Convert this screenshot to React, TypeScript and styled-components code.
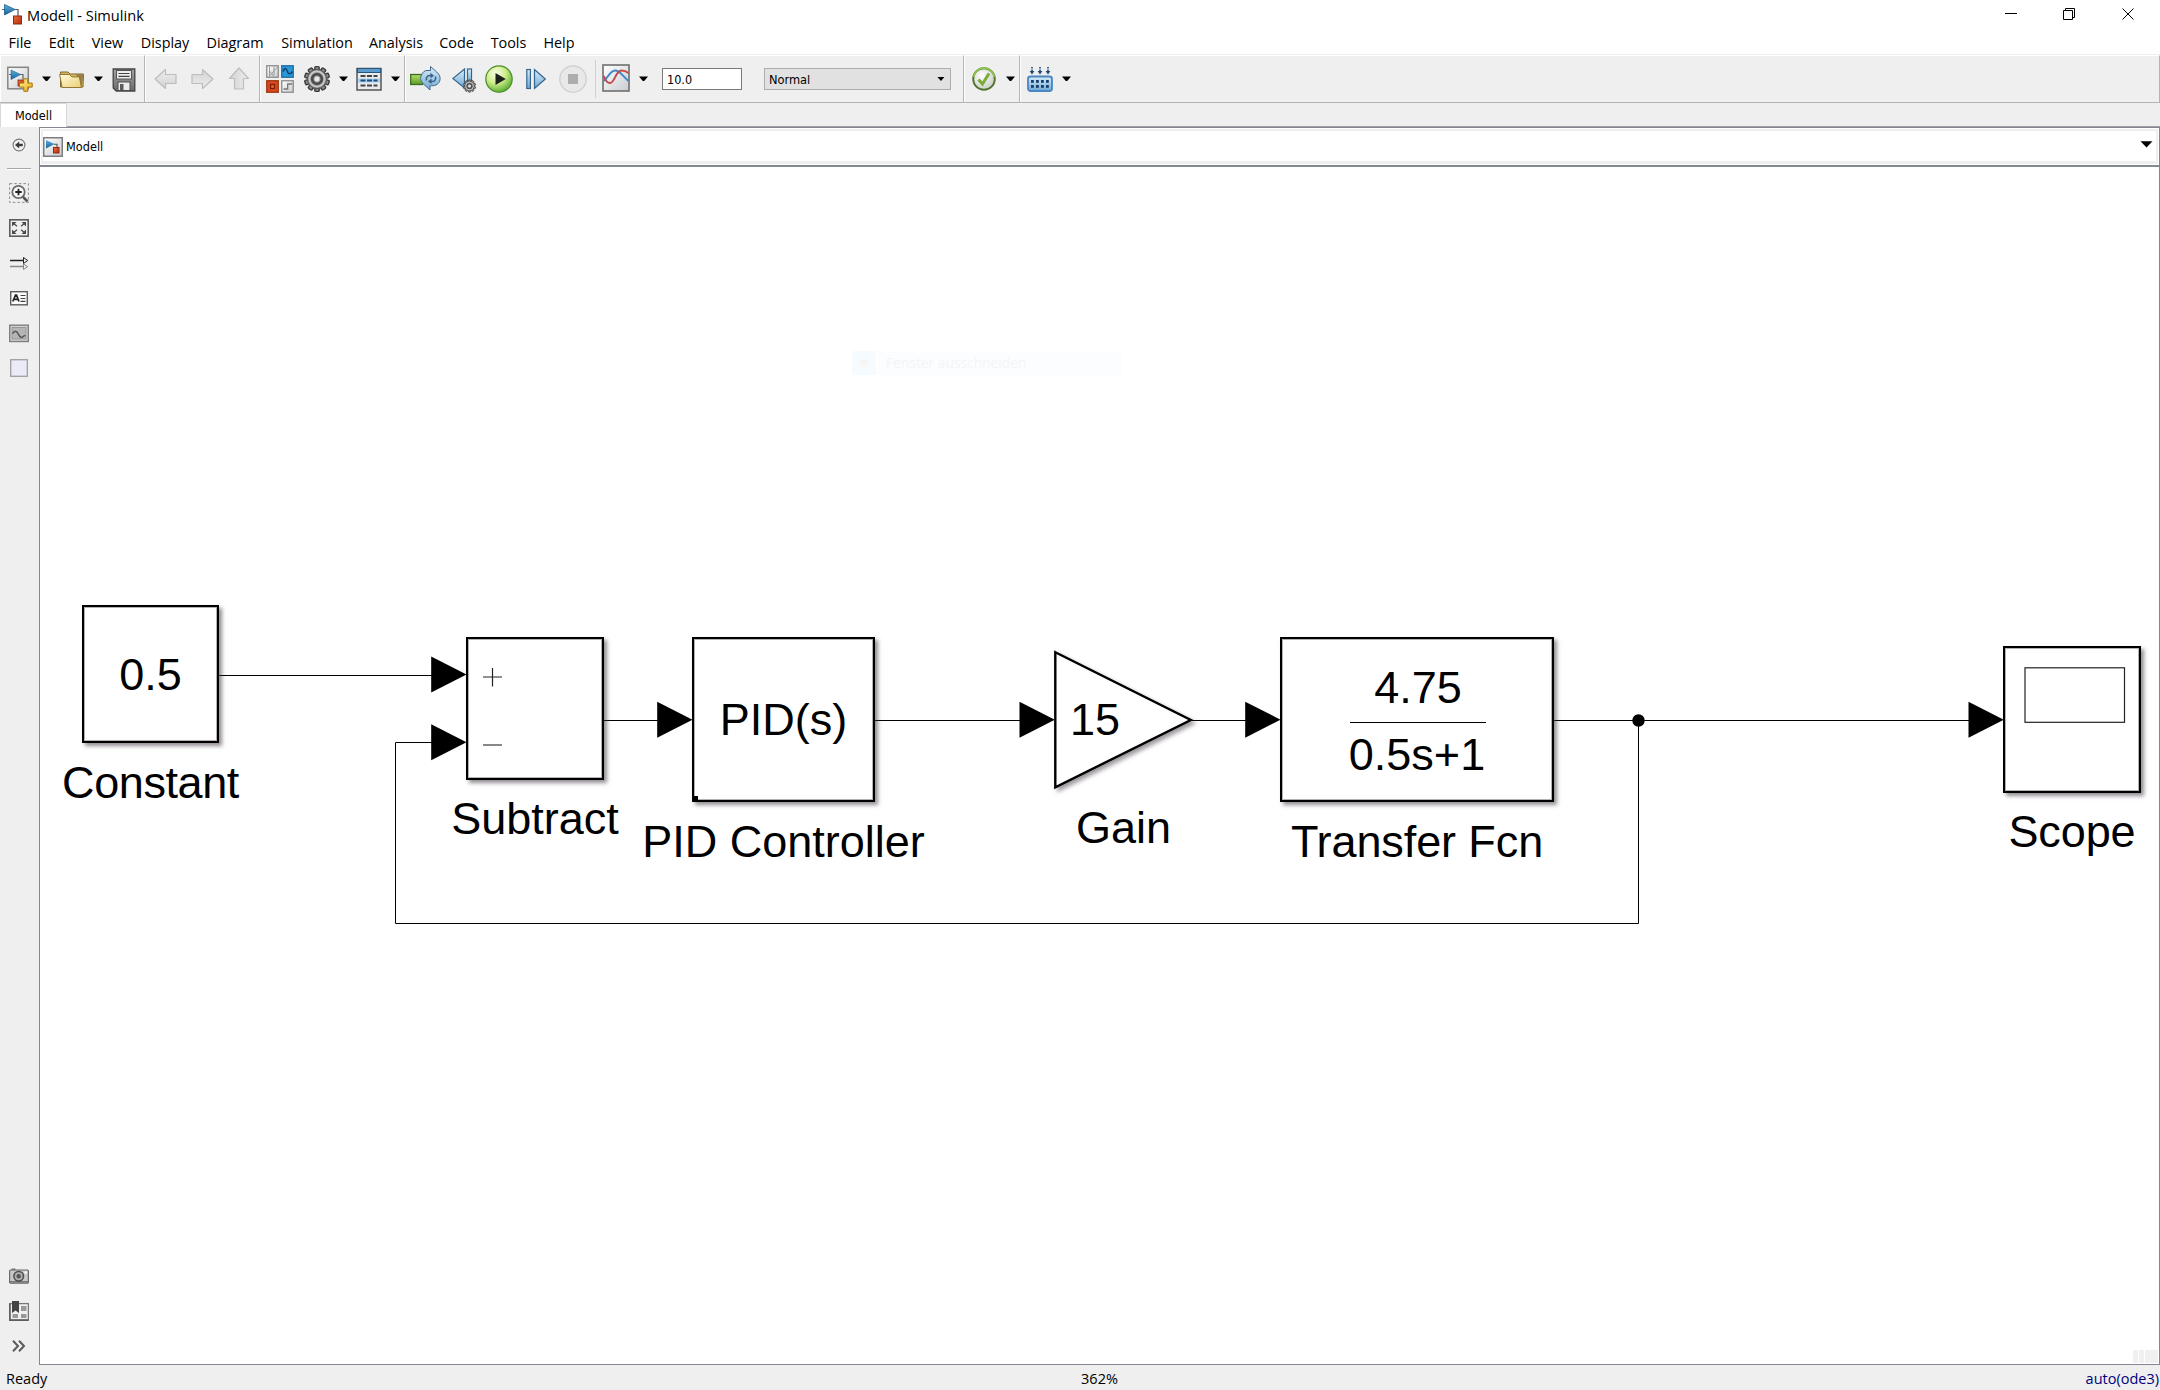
import React from 'react';
import styled, { createGlobalStyle } from 'styled-components';

const UI_FONT = '"Open Sans", "Noto Sans", sans-serif';
const SMALL_FONT = '"DejaVu Sans Condensed", "DejaVu Sans", sans-serif';
const BLOCK_FONT = '"Liberation Sans", Arial, sans-serif';
const EDGE = '#828790';

const GlobalStyle = createGlobalStyle`
  html, body { margin: 0; padding: 0; background: #fff; }
  body { overflow: hidden; }
  *, *::before, *::after { box-sizing: border-box; }
  svg { display: block; flex: none; }
`;

/* ---------- window frame ---------- */

const Window = styled.div`
  display: flex;
  flex-direction: column;
  width: 2160px;
  height: 1390px;
  background: #fff;
  color: #000;
  font: 14.5px/20px ${UI_FONT};
`;

const TitleBar = styled.header`
  display: flex;
  align-items: center;
  height: 30px;
  padding-left: 2px;
`;

const Title = styled.span`
  flex: 1;
  padding-left: 5px;
  font-size: 14.6px;
`;

const WindowControls = styled.div`
  display: flex;
  margin-right: -1px;
`;

const MenuBar = styled.nav`
  display: flex;
  height: 24px;
`;

const MenuItem = styled.span<{ $w: number }>`
  width: ${p => p.$w}px;
  padding-top: 3px;
  text-align: center;
  white-space: nowrap;
  font-size: 14.4px;
`;

/* ---------- toolbar ---------- */

const ToolBar = styled.div`
  display: flex;
  height: 49px;
  border-top: 1px solid #efefef;
  border-bottom: 1px solid #b4b4b4;
  background: #efefef;
`;

const ToolGroup = styled.div<{ $w?: number }>`
  display: flex;
  align-items: center;
  ${p => (p.$w ? `width: ${p.$w}px;` : 'flex: 1;')}
  border-top: 1px solid #fff;
  border-left: 1px solid #fff;
  border-right: 1px solid #b4b4b4;
`;

const ToolButton = styled.span<{ $gap?: number }>`
  margin-left: ${p => p.$gap ?? 0}px;
`;

const ToolDivider = styled.i<{ $gap: number }>`
  width: 1px;
  height: 38px;
  margin-left: ${p => p.$gap}px;
  background: #cfcfcf;
`;

const TimeField = styled.div`
  width: 80px;
  height: 22px;
  margin-left: 14px;
  padding-left: 4px;
  border: 1px solid #7a7a7a;
  background: #fff;
  font: 12.5px/21px ${SMALL_FONT};
`;

const ModeSelect = styled.div`
  display: flex;
  align-items: center;
  justify-content: space-between;
  width: 187px;
  height: 22px;
  margin-left: 22px;
  padding: 0 5px 0 4px;
  border: 1px solid #adadad;
  background: #e1e1e1;
  font: 12.7px/21px ${SMALL_FONT};
`;

/* ---------- tabs ---------- */

const TabStrip = styled.div`
  display: flex;
  height: 24px;
  background: #efefef;
`;

const Tab = styled.div`
  width: 67px;
  border: 1px solid #d9d9d9;
  border-bottom: 0;
  background: #fff;
  text-align: center;
  font: 12.6px/24px ${SMALL_FONT};
`;

const TabFill = styled.div`
  flex: 1;
  border-bottom: 1px solid #a0a0a0;
`;

/* ---------- work area ---------- */

const WorkArea = styled.div`
  display: flex;
  height: 1238px;
`;

const SideBar = styled.aside`
  display: flex;
  flex-direction: column;
  width: 39px;
  padding-bottom: 2px;
  background: #efefef;
`;

const SideButton = styled.span<{ $h?: number }>`
  display: flex;
  align-items: center;
  height: ${p => p.$h ?? 35}px;
  padding-left: 9px;
`;

const SideRule = styled.i`
  width: 24px;
  height: 2px;
  margin: 5px 0 5px 7px;
  border-top: 1px solid #a8a8a8;
  border-bottom: 1px solid #fff;
`;

const SideSpacer = styled.div`
  flex: 1;
`;

const EditorPane = styled.main`
  display: flex;
  flex: 1;
  flex-direction: column;
  border: 1px solid ${EDGE};
`;

const PathBar = styled.div`
  padding: 1px 1px 1px 1px;
  border-bottom: 2px solid ${EDGE};
`;

const PathInner = styled.div`
  display: flex;
  align-items: center;
  height: 35px;
  padding-top: 1px;
  padding-right: 3px;
  border: 2px solid #efefef;
  border-bottom-width: 3px;
`;

const PathName = styled.span`
  flex: 1;
  padding-left: 3px;
  font: 12.6px/20px ${SMALL_FONT};
`;

const StatusBar = styled.footer`
  display: grid;
  grid-template-columns: 1fr auto 1fr;
  height: 25px;
  padding: 4px 1px 0 6px;
  background: #efefef;
  font-size: 14.5px;
`;

const Zoom = styled.span`
  padding-left: 34px;
`;

const Solver = styled.span`
  text-align: right;
  color: #000080;
`;

/* ---------- diagram canvas ---------- */

const Canvas = styled.div`
  position: relative;
  flex: 1;
  overflow: hidden;
  background: #fff;
  font: 45px/52px ${BLOCK_FONT};
`;

const Wires = styled.svg`
  position: absolute;
  inset: 0;
`;

const Block = styled.div<{ $x: number; $y: number; $w: number }>`
  position: absolute;
  left: ${p => p.$x}px;
  top: ${p => p.$y}px;
  display: flex;
  flex-direction: column;
  align-items: center;
  width: ${p => p.$w}px;
`;

const Frame = styled.div<{ $h: number }>`
  display: flex;
  flex-direction: column;
  align-items: center;
  justify-content: center;
  width: 100%;
  height: ${p => p.$h}px;
  padding-top: 1px;
  border: 2px solid #000;
  background: #fff;
  box-shadow: inset 0 0 0 1px rgba(0, 0, 0, 0.3), 3px 3px 4px rgba(60, 50, 60, 0.55);
`;

const PlainFrame = styled.div`
  position: relative;
  width: 100%;
`;

const GainValue = styled.span`
  position: absolute;
  left: 16px;
  top: 44px;
`;

const BlockName = styled.div<{ $gap: number; $track?: number }>`
  margin-top: ${p => p.$gap}px;
  letter-spacing: ${p => p.$track ?? 0}px;
  white-space: nowrap;
`;

const Fraction = styled.div`
  display: flex;
  flex-direction: column;
  align-items: center;
  width: 136px;
  padding-top: 3px;
  margin-left: 2px;
`;

const Numerator = styled.div`
  padding-bottom: 8px;
`;

const Denominator = styled.div`
  width: 100%;
  padding-top: 6px;
  border-top: 1px solid #000;
  text-indent: -2px;
  text-align: center;
  white-space: nowrap;
`;

const MenuGhost = styled.div`
  position: absolute;
  left: 812px;
  top: 184px;
  display: flex;
  gap: 1px;
  width: 270px;
  height: 24px;
  font: 13.8px/24px ${UI_FONT};
  color: #f5f5f6;
`;

const GhostIcon = styled.div`
  width: 24px;
  padding: 8px;
  background: #f6fbff;
`;

const GhostText = styled.div`
  flex: 1;
  padding-left: 9px;
  background: #fbfdff;
`;

const CornerGrip = styled.div`
  position: absolute;
  right: 1px;
  bottom: 1px;
  display: grid;
  grid-template-columns: 5px 5px 13px;
  gap: 1px;
  height: 13px;
`;

const GripCell = styled.i`
  background: #f0f0f0;
`;

/* ---------- icons ---------- */

const DefsSvg = styled.svg`
  position: absolute;
`;

const Defs = () => (
  <DefsSvg width="0" height="0">
    <defs>
      <linearGradient id="paper" x1="0" y1="0" x2="1" y2="1">
        <stop offset="0" stopColor="#fff" /><stop offset="1" stopColor="#c9cdd1" />
      </linearGradient>
      <linearGradient id="blue" x1="0" y1="0" x2="0" y2="1">
        <stop offset="0" stopColor="#5cb4e0" /><stop offset="1" stopColor="#145f9c" />
      </linearGradient>
      <linearGradient id="sky" x1="0" y1="0" x2="0" y2="1">
        <stop offset="0" stopColor="#d9edf9" /><stop offset="1" stopColor="#6fa9d3" />
      </linearGradient>
      <linearGradient id="red" x1="0" y1="0" x2="1" y2="1">
        <stop offset="0" stopColor="#ee6b3c" /><stop offset="1" stopColor="#b32c0c" />
      </linearGradient>
      <linearGradient id="gold" x1="0" y1="0" x2="1" y2="1">
        <stop offset="0" stopColor="#fff7a0" /><stop offset="1" stopColor="#e5a80e" />
      </linearGradient>
      <linearGradient id="folder" x1="0" y1="0" x2="1" y2="1">
        <stop offset="0" stopColor="#fffbe0" /><stop offset="1" stopColor="#edcf72" />
      </linearGradient>
      <linearGradient id="steel" x1="0" y1="0" x2="0" y2="1">
        <stop offset="0" stopColor="#a6a6a6" /><stop offset="1" stopColor="#6a6a6a" />
      </linearGradient>
      <linearGradient id="fade" x1="0" y1="0" x2="0" y2="1">
        <stop offset="0" stopColor="#eeeeee" /><stop offset="1" stopColor="#d2d2d2" />
      </linearGradient>
      <linearGradient id="green" x1="0" y1="0" x2="0" y2="1">
        <stop offset="0" stopColor="#b4dc6c" /><stop offset="1" stopColor="#5c9c26" />
      </linearGradient>
      <radialGradient id="play" cx="0.38" cy="0.3" r="0.75">
        <stop offset="0" stopColor="#fbffe6" /><stop offset="0.5" stopColor="#cdeb8a" /><stop offset="1" stopColor="#4fa82a" />
      </radialGradient>
      <radialGradient id="disc" cx="0.4" cy="0.35" r="0.75">
        <stop offset="0" stopColor="#fff" /><stop offset="1" stopColor="#c4cac0" />
      </radialGradient>
    </defs>
  </DefsSvg>
);

const Caret = () => (
  <svg width="9" height="6" viewBox="0 0 9 6"><path d="M0 .4h9L5.2 5h-1.4z" fill="#000" /></svg>
);

const SmallCaret = () => (
  <svg width="8" height="5" viewBox="0 0 8 5"><path d="M.4 0h7L4 4z" fill="#000" /></svg>
);

const PathCaret = () => (
  <svg width="13" height="11" viewBox="0 0 13 11"><path d="M.5.3h12L6.500 6.600z" fill="#000" /></svg>
);

const AppIcon = () => (
  <svg width="20" height="22" viewBox="0 0 20 22">
    <path d="M0 5.500h3M13 5.500h3v7" fill="none" stroke="#555c63" strokeWidth="1.2" />
    <path d="M2.500.5 13 5.500 2.500 11z" fill="url(#blue)" stroke="#1c5d8c" strokeWidth=".8" />
    <rect x="11.500" y="12" width="8" height="8" fill="url(#red)" stroke="#8d2a10" />
  </svg>
);

const ModelIcon = () => (
  <svg width="20" height="20" viewBox="0 0 20 20">
    <rect x=".75" y=".75" width="18.500" height="18.500" fill="url(#paper)" stroke="#7d7d7d" strokeWidth="1.5" />
    <path d="M11 7.200h3v3.500" fill="none" stroke="#555" strokeWidth="1.1" />
    <path d="M3 3l8.500 4L3 11.400z" fill="url(#blue)" />
    <rect x="10.500" y="10.500" width="5.500" height="5.500" fill="url(#red)" stroke="#8d2a10" />
  </svg>
);

const NewModelIcon = () => (
  <svg width="26" height="30" viewBox="0 0 26 30">
    <rect x=".8" y="3.300" width="20.500" height="21.500" fill="url(#paper)" stroke="#858585" strokeWidth="1.5" />
    <path d="M2 10.500h3M13 10.500h3v5" fill="none" stroke="#666" strokeWidth="1.2" />
    <path d="M4 6l9.500 4.500L4 15.500z" fill="url(#blue)" stroke="#1c5d8c" strokeWidth=".6" />
    <rect x="11" y="16" width="6" height="6" fill="url(#red)" stroke="#8d2a10" strokeWidth=".8" />
    <path d="M16.800 14.800h4v4.300h4.400v4h-4.400V27.300h-4v-4.200h-4.300v-4h4.300z" fill="url(#gold)" stroke="#a87407" />
  </svg>
);

const OpenIcon = () => (
  <svg width="26" height="30" viewBox="0 0 26 30">
    <path d="M1.500 23V8h7.500l2 2h13.500l-.5 13z" fill="#d9b85b" stroke="#80662c" />
    <path d="M17 10h7.500l-2 13z" fill="#9b7f45" />
    <path d="M.6 10.500h9.800l2.500 2.400h7.500L22.400 23.500H3.200z" fill="url(#folder)" stroke="#927638" />
  </svg>
);

const SaveIcon = () => (
  <svg width="24" height="30" viewBox="0 0 24 30">
    <path d="M1.200 5h21.600v22H4.200l-3-3z" fill="url(#steel)" stroke="#444" strokeWidth="1.3" />
    <rect x="4.500" y="6.500" width="15" height="8.500" fill="#ececec" stroke="#555" />
    <path d="M6.500 9.500h11M6.500 12.300h11" stroke="#444" strokeWidth="1.2" />
    <rect x="6" y="18" width="12" height="8.500" fill="#ececec" stroke="#4c4c4c" />
    <rect x="8" y="20" width="3.500" height="6" fill="#5a5a5a" />
  </svg>
);

const ArrowIcon = ({ turn }: { turn: number }) => (
  <svg width="24" height="30" viewBox="0 0 24 30">
    <g transform={`rotate(${turn} 12 15)`}>
      <path d="M1 15 11.500 5.500v5h10.500v9H11.500v5z" fill="url(#fade)" stroke="#bdbdbd" strokeWidth="1.2" strokeLinejoin="round" />
    </g>
  </svg>
);

const LibraryIcon = () => (
  <svg width="28" height="30" viewBox="0 0 28 30">
    <rect x=".75" y="1.750" width="11.500" height="11.500" fill="url(#paper)" stroke="#8b8b8b" strokeWidth="1.300" />
    <path d="M3.500 2.500v10M8 2.500v9M3.500 12l8-9M3.500 7l4 5" fill="none" stroke="#9a9a9a" />
    <rect x="15.750" y="1.750" width="11.500" height="11.500" fill="#2b97d6" stroke="#1b6ea6" strokeWidth="1.300" />
    <path d="M17 7.500c1.500-4 3-4 4.200-.5s2.800 4 5.300.5" fill="none" stroke="#0b3f6b" strokeWidth="1.400" />
    <rect x=".75" y="16.750" width="11.500" height="11.500" fill="#d9481f" stroke="#a2330f" strokeWidth="1.300" />
    <rect x="4.500" y="20.500" width="4" height="4" fill="#e8663c" stroke="#7d1f08" strokeWidth="1.300" />
    <rect x="15.750" y="16.750" width="11.500" height="11.500" fill="url(#paper)" stroke="#8b8b8b" strokeWidth="1.300" />
    <path d="M17.500 25h4.200v-5h4.500" fill="none" stroke="#777" strokeWidth="1.300" />
  </svg>
);

const GearShape = ({ cx, cy, r }: { cx: number; cy: number; r: number }) => (
  <g transform={`translate(${cx} ${cy}) scale(${r / 13})`}>
    {[0, 36, 72, 108, 144].map(a => (
      <rect key={a} x="-2.200" y="-12.400" width="4.400" height="24.800" rx="1" transform={`rotate(${a})`} fill="#8a8a8a" stroke="#3c3c3c" strokeWidth="1.400" />
    ))}
    <circle r="9.600" fill="#8c8c8c" stroke="#555" />
    <circle r="7.600" fill="none" stroke="#c9c9c9" strokeWidth="1.800" />
    <circle r="4.800" fill="#b4b4b4" stroke="#4a4a4a" strokeWidth="2.600" />
    <circle r="2.200" fill="#ececec" />
  </g>
);

const GearIcon = () => (
  <svg width="26" height="30" viewBox="0 0 26 30"><GearShape cx={13} cy={15} r={13} /></svg>
);

const ExplorerIcon = () => (
  <svg width="26" height="30" viewBox="0 0 26 30">
    <rect x="1" y="4.500" width="24" height="21.500" fill="#e9ebee" stroke="#555" strokeWidth="1.500" />
    <rect x="1.500" y="4.500" width="23" height="4" fill="#5c9bce" stroke="#27567e" />
    <rect x="2" y="14.500" width="22" height="4" fill="#a9d0ee" />
    <path d="M4.500 12h5m1.500 0h5m1.500 0h4M4.500 21.500h5m1.500 0h5m1.500 0h4" stroke="#444" strokeWidth="1.800" />
    <path d="M4.500 16.500h5m1.500 0h5m1.500 0h4" stroke="#1d4a75" strokeWidth="1.800" />
  </svg>
);

const FastRestartIcon = () => (
  <svg width="31" height="30" viewBox="0 0 31 30">
    <rect x=".7" y="10.500" width="12" height="10" fill="url(#green)" stroke="#3c6f1c" strokeWidth="1.300" />
    <path d="M17 6.500h3.500V2.500l6 5.300c3 2.500 4 5 3.500 8-.6 4-4 6-8.500 6h-1.500v4.200l-6.500-6c-3-3-3.600-6-2-9 1.200-2.800 3-4.500 5.500-4.500z" fill="url(#sky)" stroke="#44698c" />
    <path d="M16.500 16.500c-.8-4 1.500-5.500 5-5M25.500 12.500c.8 4-1.500 5.500-5 5" fill="none" stroke="#3c5f86" strokeWidth="1.500" />
    <path d="M20.500 8.700l3.500 3-3.500 2.600zM21.500 14.500l-3.500 3 3.500 2.600z" fill="#3c5f86" />
  </svg>
);

const StepBackIcon = () => (
  <svg width="25" height="30" viewBox="0 0 25 30">
    <path d="M12.500 5v19L.8 14.500z" fill="url(#sky)" stroke="#33658f" strokeWidth="1.200" />
    <rect x="15.500" y="5" width="4" height="14" fill="url(#sky)" stroke="#33658f" strokeWidth="1.200" />
    <GearShape cx={17.500} cy={22} r={6.500} />
  </svg>
);

const RunIcon = () => (
  <svg width="28" height="30" viewBox="0 0 28 30">
    <circle cx="14" cy="15" r="13.200" fill="url(#play)" stroke="#4b8f28" strokeWidth="1.200" />
    <path d="M10.500 9 20.800 15l-10.300 6z" fill="#1c211a" />
  </svg>
);

const StepForwardIcon = () => (
  <svg width="20" height="30" viewBox="0 0 20 30">
    <rect x=".8" y="5.500" width="3.600" height="19" fill="url(#sky)" stroke="#33658f" strokeWidth="1.200" />
    <path d="M8.500 5.500v19l10.800-9.500z" fill="url(#sky)" stroke="#33658f" strokeWidth="1.200" />
  </svg>
);

const StopIcon = () => (
  <svg width="28" height="30" viewBox="0 0 28 30">
    <circle cx="14" cy="15" r="13.200" fill="#e8e8e8" stroke="#cdcdcd" strokeWidth="1.200" />
    <rect x="9" y="10" width="10" height="10" fill="#adadad" />
  </svg>
);

const ScopeIcon = () => (
  <svg width="28" height="30" viewBox="0 0 28 30">
    <rect x="1" y="1" width="26" height="26" fill="url(#paper)" stroke="#6f6f6f" strokeWidth="1.600" />
    <path d="M2 17C5 15 8 6.500 13 6.500s7 5 13.500 10.500" fill="none" stroke="#3d88cc" strokeWidth="1.900" />
    <path d="M2 12c1.500 5 3.500 7 6 7 5 0 5.500-12.500 11.500-12.500 3 0 5 1 7 2.500" fill="none" stroke="#c74848" strokeWidth="1.900" />
  </svg>
);

const CheckIcon = () => (
  <svg width="24" height="30" viewBox="0 0 24 30">
    <circle cx="12" cy="15" r="10.800" fill="url(#disc)" stroke="#55752f" strokeWidth="1.900" />
    <path d="M1.700 13a10.400 10.400 0 0 1 20.600 0" fill="none" stroke="#8fc94a" strokeWidth="1.700" />
    <path d="M6.500 15.500l4 4.500 6.500-10.500" fill="none" stroke="#79ad35" strokeWidth="3" />
  </svg>
);

const BuildIcon = () => (
  <svg width="26" height="30" viewBox="0 0 26 30">
    <g fill="#1f4a78">
      {[5, 13, 21].map(x => (
        <path key={x} d={`M${x - 0.8} 3h1.600v1.500h-1.600zM${x - 0.8} 5.500h1.600V7h1.600L${x} 10.600 ${x - 2.4} 7h1.600z`} />
      ))}
    </g>
    <rect x="1" y="12.500" width="24" height="14.500" rx="2.500" fill="url(#sky)" stroke="#4a86bf" strokeWidth="1.800" />
    <g fill="#153e6c">
      {[5, 10, 15, 20].map(x => <rect key={x} x={x - 1} y="16" width="2.800" height="2.800" />)}
      {[5, 10, 15, 20].map(x => <rect key={x} x={x - 1} y="21" width="2.800" height="2.800" />)}
    </g>
  </svg>
);

const HideIcon = () => (
  <svg width="20" height="20" viewBox="0 0 20 20">
    <circle cx="10" cy="10" r="5.900" fill="#f4f4f4" stroke="#7b7b7b" strokeWidth="1.200" />
    <path d="M6 10l4.200-3.600v2.400h3.600v2.400h-3.600v2.400z" fill="#3c3c3c" />
  </svg>
);

const ZoomIcon = () => (
  <svg width="20" height="20" viewBox="0 0 20 20">
    <rect x=".6" y=".6" width="18.800" height="18.800" fill="none" stroke="#8f8f8f" strokeDasharray="2.600 2" />
    <circle cx="9.500" cy="9" r="6.200" fill="#fafafa" stroke="#6c6c6c" strokeWidth="1.800" />
    <path d="M9.500 5.800v6.400M6.300 9h6.400" stroke="#222" strokeWidth="1.800" />
    <path d="M14 13.800l4.500 4.700" stroke="#555" strokeWidth="2.600" />
  </svg>
);

const FitIcon = () => (
  <svg width="20" height="20" viewBox="0 0 20 20">
    <rect x=".8" y="1.800" width="18.400" height="16.400" fill="#f0f0f0" stroke="#5d5d5d" strokeWidth="1.600" />
    <path d="M3 4h4.500L3 8.500zM17 4h-4.500L17 8.500zM3 16h4.500L3 11.500zM17 16h-4.500l4.500-4.500z" fill="#4a4a4a" />
    <path d="M4 5l4 3.300M16 5l-4 3.300M4 15l4-3.300M16 15l-4-3.300" stroke="#4a4a4a" strokeWidth="1.300" />
  </svg>
);

const SampleTimeIcon = () => (
  <svg width="20" height="20" viewBox="0 0 20 20">
    <path d="M1 7.500h14" stroke="#222" strokeWidth="1.500" />
    <path d="M1 13.500h14" stroke="#888" strokeWidth="1.500" />
    <path d="M14.500 4.500l4.200 3-4.200 3z" fill="#eee" stroke="#222" />
    <path d="M14.500 11l4.200 2.700-4.200 2.800z" fill="#eee" stroke="#888" />
  </svg>
);

const AnnotationIcon = () => (
  <svg width="20" height="20" viewBox="0 0 20 20">
    <rect x="1.700" y="3.700" width="16.600" height="13.100" fill="#fbfbfb" stroke="#5d5d5d" strokeWidth="1.400" />
    <path d="M3.800 13.500 6.500 7.200h1L10 13.500M5 11.300h4" fill="none" stroke="#222" strokeWidth="1.700" />
    <path d="M11.500 7.500h5M11.500 10.500h5M11.500 13.300h5" stroke="#444" strokeWidth="1.200" />
  </svg>
);

const ImageIcon = () => (
  <svg width="20" height="20" viewBox="0 0 20 20">
    <rect x=".7" y="2.200" width="18.600" height="16.300" fill="#d4d4d4" stroke="#7f7f7f" strokeWidth="1.400" />
    <rect x="3" y="4.500" width="14" height="11.500" fill="#b5b5b5" stroke="#979797" />
    <path d="M3.500 10.500c2-3 4-3 5.500 0s3 5 4.500 3.500 1.500-1.500 3-1.500" fill="none" stroke="#555" strokeWidth="1.600" />
  </svg>
);

const AreaIcon = () => (
  <svg width="20" height="20" viewBox="0 0 20 20">
    <rect x="1.700" y="1.700" width="16.600" height="16.600" fill="#eaeaf8" stroke="#9f9f9f" strokeWidth="1.300" />
  </svg>
);

const CameraIcon = () => (
  <svg width="20" height="20" viewBox="0 0 20 20">
    <path d="M2.500 2.500h4V5h-4z" fill="#777" />
    <rect x=".6" y="4" width="18.800" height="13.200" rx="1" fill="#c8c8c8" stroke="#6a6a6a" strokeWidth="1.200" />
    <path d="M1 15.800h18" stroke="#777" strokeWidth="1.500" />
    <circle cx="9.700" cy="10.300" r="4.800" fill="#b0b0b0" stroke="#4f4f4f" strokeWidth="1.600" />
    <circle cx="9.700" cy="10.300" r="2.200" fill="#555" />
    <rect x="15.500" y="5.500" width="2.500" height="2" fill="#fff" />
  </svg>
);

const BrowserIcon = () => (
  <svg width="20" height="20" viewBox="0 0 20 20">
    <rect x=".6" y="2.600" width="18.800" height="16.800" fill="#f0f0f0" stroke="#777" strokeWidth="1.300" />
    <path d="M1 3v16h18" fill="none" stroke="#555" strokeWidth="1.300" />
    <rect x="12" y="5" width="5.500" height="5" fill="#999" />
    <rect x="3.500" y="13" width="5.500" height="4" fill="#999" />
    <rect x="12" y="13" width="5.500" height="4" fill="#999" />
    <path d="M3 0h7v12L6.500 9.500 3 12z" fill="#444" />
  </svg>
);

const ExpandIcon = () => (
  <svg width="20" height="20" viewBox="0 0 20 20">
    <path d="M4 4.800l5 5.200-5 5.200M10 4.800l5 5.200-5 5.200" fill="none" stroke="#5a5a5a" strokeWidth="2" />
  </svg>
);

/* ---------- content ---------- */

const menus: [string, number][] = [
  ['File', 40], ['Edit', 43], ['View', 49], ['Display', 66], ['Diagram', 74],
  ['Simulation', 90], ['Analysis', 68], ['Code', 53], ['Tools', 51], ['Help', 50],
];

const Arrowhead = ({ x, y }: { x: number; y: number }) => (
  <path d={`M${x - 35.3} ${y - 18}L${x} ${y}L${x - 35.3} ${y + 18}z`} fill="#000" />
);

const GainOutline = styled.path`
  fill: #fff;
  stroke: #000;
  stroke-width: 2.4px;
  filter: drop-shadow(3px 3px 2px rgba(60, 50, 60, 0.5));
`;

export default function App() {
  return (
    <Window>
      <GlobalStyle />
      <Defs />
      <TitleBar>
        <AppIcon />
        <Title>Modell - Simulink</Title>
        <WindowControls>
          <svg width="156" height="30" viewBox="0 0 156 30" fill="none" stroke="#000">
            <path d="M0 13.500h12M58.500 10.500h9v9h-9zM60.500 10.500v-2h9v9h-2" />
            <path d="M117.500 8.500l11 11M128.500 8.500l-11 11" />
          </svg>
        </WindowControls>
      </TitleBar>
      <MenuBar>
        {menus.map(([name, w]) => <MenuItem key={name} $w={w}>{name}</MenuItem>)}
      </MenuBar>

      <ToolBar>
        <ToolGroup $w={145}>
          <ToolButton $gap={6}><NewModelIcon /></ToolButton>
          <ToolButton $gap={9}><Caret /></ToolButton>
          <ToolButton $gap={8}><OpenIcon /></ToolButton>
          <ToolButton $gap={9}><Caret /></ToolButton>
          <ToolButton $gap={9}><SaveIcon /></ToolButton>
        </ToolGroup>
        <ToolGroup $w={115}>
          <ToolButton $gap={8}><ArrowIcon turn={0} /></ToolButton>
          <ToolButton $gap={12}><ArrowIcon turn={180} /></ToolButton>
          <ToolButton $gap={13}><ArrowIcon turn={90} /></ToolButton>
        </ToolGroup>
        <ToolGroup $w={145}>
          <ToolButton $gap={5}><LibraryIcon /></ToolButton>
          <ToolButton $gap={10}><GearIcon /></ToolButton>
          <ToolButton $gap={9}><Caret /></ToolButton>
          <ToolButton $gap={8}><ExplorerIcon /></ToolButton>
          <ToolButton $gap={9}><Caret /></ToolButton>
        </ToolGroup>
        <ToolGroup $w={559}>
          <ToolButton $gap={4}><FastRestartIcon /></ToolButton>
          <ToolButton $gap={11}><StepBackIcon /></ToolButton>
          <ToolButton $gap={8}><RunIcon /></ToolButton>
          <ToolButton $gap={13}><StepForwardIcon /></ToolButton>
          <ToolButton $gap={13}><StopIcon /></ToolButton>
          <ToolDivider $gap={8} />
          <ToolButton $gap={6}><ScopeIcon /></ToolButton>
          <ToolButton $gap={9}><Caret /></ToolButton>
          <TimeField>10.0</TimeField>
          <ModeSelect>Normal<SmallCaret /></ModeSelect>
        </ToolGroup>
        <ToolGroup $w={56}>
          <ToolButton $gap={7}><CheckIcon /></ToolButton>
          <ToolButton $gap={10}><Caret /></ToolButton>
        </ToolGroup>
        <ToolGroup>
          <ToolButton $gap={6}><BuildIcon /></ToolButton>
          <ToolButton $gap={9}><Caret /></ToolButton>
        </ToolGroup>
      </ToolBar>

      <TabStrip>
        <Tab>Modell</Tab>
        <TabFill />
      </TabStrip>

      <WorkArea>
        <SideBar>
          <SideButton $h={36}><HideIcon /></SideButton>
          <SideRule />
          <SideButton><ZoomIcon /></SideButton>
          <SideButton><FitIcon /></SideButton>
          <SideButton><SampleTimeIcon /></SideButton>
          <SideButton><AnnotationIcon /></SideButton>
          <SideButton><ImageIcon /></SideButton>
          <SideButton><AreaIcon /></SideButton>
          <SideSpacer />
          <SideButton><CameraIcon /></SideButton>
          <SideButton><BrowserIcon /></SideButton>
          <SideButton><ExpandIcon /></SideButton>
        </SideBar>

        <EditorPane>
          <PathBar>
            <PathInner>
              <ModelIcon />
              <PathName>Modell</PathName>
              <PathCaret />
            </PathInner>
          </PathBar>

          <Canvas>
            <Wires width="2119" height="1197" viewBox="0 0 2119 1197">
              <g fill="none" stroke="#000">
                <path d="M179 508.500H392" />
                <path d="M564 553.500H618" />
                <path d="M835 553.500H980" />
                <path d="M1152 553.500H1206" />
                <path d="M1514 553.500H1930" />
                <path d="M1598.500 553.500V756.500H355.500V575.500H392" />
              </g>
              <circle cx="1598.500" cy="553.500" r="6.200" fill="#000" />
              <Arrowhead x={426.500} y={507.500} />
              <Arrowhead x={426.500} y={575.200} />
              <Arrowhead x={652.500} y={552.700} />
              <Arrowhead x={1014.800} y={552.700} />
              <Arrowhead x={1240.500} y={552.700} />
              <Arrowhead x={1963.800} y={552.700} />
            </Wires>

            <Block $x={42} $y={438} $w={137}>
              <Frame $h={138}>0.5</Frame>
              <BlockName $gap={14} $track={-0.4}>Constant</BlockName>
            </Block>

            <Block $x={426} $y={470} $w={138}>
              <Frame $h={143}>
                <svg width="134" height="138" viewBox="0 1 134 138" fill="none">
                  <path d="M15 38h19M24.500 29v18.500" stroke="#222" strokeWidth="1.200" />
                  <path d="M15 106h19" stroke="#555" strokeWidth="1.400" />
                </svg>
              </Frame>
              <BlockName $gap={13}>Subtract</BlockName>
            </Block>

            <Block $x={652} $y={470} $w={183}>
              <Frame $h={165}>PID(s)</Frame>
              <BlockName $gap={14}>PID Controller</BlockName>
            </Block>
            <Block $x={652} $y={629} $w={6}>
              <svg width="6" height="6"><rect width="6" height="6" fill="#000" /></svg>
            </Block>

            <Block $x={1014} $y={483} $w={139}>
              <PlainFrame>
                <svg width="150" height="139" viewBox="0 0 150 139" overflow="visible">
                  <GainOutline d="M1.300 2.200 136.800 70 1.300 137.300z" />
                </svg>
                <GainValue>15</GainValue>
              </PlainFrame>
              <BlockName $gap={13}>Gain</BlockName>
            </Block>

            <Block $x={1240} $y={470} $w={274}>
              <Frame $h={165}>
                <Fraction>
                  <Numerator>4.75</Numerator>
                  <Denominator>0.5s+1</Denominator>
                </Fraction>
              </Frame>
              <BlockName $gap={14} $track={-0.1}>Transfer Fcn</BlockName>
            </Block>

            <Block $x={1963} $y={479} $w={138}>
              <Frame $h={147}>
                <svg width="134" height="142" viewBox="0 1 134 142">
                  <rect x="20" y="19.800" width="99.500" height="54.500" fill="none" stroke="#222" strokeWidth="1.200" />
                </svg>
              </Frame>
              <BlockName $gap={13} $track={-0.1}>Scope</BlockName>
            </Block>

            <MenuGhost>
              <GhostIcon>
                <svg width="8" height="8"><circle cx="4" cy="4" r="4" fill="#f8f6f5" /></svg>
              </GhostIcon>
              <GhostText>Fenster ausschneiden</GhostText>
            </MenuGhost>

            <CornerGrip>
              <GripCell /><GripCell /><GripCell />
            </CornerGrip>
          </Canvas>
        </EditorPane>
      </WorkArea>

      <StatusBar>
        <span>Ready</span>
        <Zoom>362%</Zoom>
        <Solver>auto(ode3)</Solver>
      </StatusBar>
    </Window>
  );
}
